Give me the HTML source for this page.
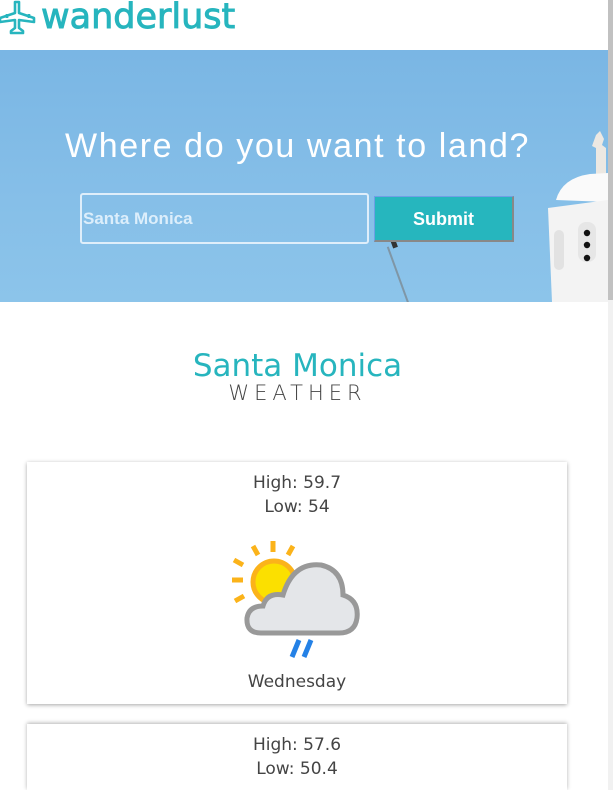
<!DOCTYPE html>
<html style="overflow:hidden;height:790px"><head><style>
*{margin:0;padding:0;box-sizing:border-box}
body{width:613px;height:790px;overflow:hidden;background:#fff;font-family:"Liberation Sans",sans-serif;position:relative}
.sb{position:absolute;right:0;top:0;width:5px;height:790px;background:#f1f1f1}
.sb div{position:absolute;left:0;top:0;width:5px;height:300px;background:#c1c1c1}
.logo{position:absolute;left:0;top:-2px;height:38px;display:flex;align-items:center;color:#27b5be;font-size:35px;-webkit-text-stroke:0.9px #27b5be;font-family:"DejaVu Sans",sans-serif}
.hero{position:absolute;left:0;top:50px;width:608px;height:252px;background:linear-gradient(180deg,#7ab6e4 0%,#86bfe8 60%,#8cc4ea 100%);overflow:hidden}
.hero h1{position:absolute;left:0;width:595px;top:77px;text-align:center;color:#fff;font-weight:normal;font-size:34px;font-family:"Liberation Sans",sans-serif;letter-spacing:1.6px}
.inp{position:absolute;left:80px;top:143px;width:289px;height:51px;border:2px solid #dfeefa;border-radius:3px;color:#dceefb;font-size:17px;font-weight:bold;line-height:47px;padding-left:1px}
.btn{position:absolute;left:374px;top:146px;width:140px;height:46px;background:#26b6be;border:1px solid #6f9fe6;border-right:2px solid #888;border-bottom:2px solid #888;color:#fff;font-weight:bold;font-size:18px;text-align:center;line-height:44px}
.title{position:absolute;top:348px;left:0;width:595px;text-align:center;color:#27b5be;font-size:31px;font-family:"DejaVu Sans",sans-serif}
.sub{position:absolute;top:381px;left:0;width:595px;text-align:center;color:#444;font-size:21px;letter-spacing:5px;font-family:"DejaVu Sans",sans-serif;font-weight:300}
.card{position:absolute;left:27px;width:540px;background:#fff;box-shadow:0 1px 4px rgba(0,0,0,.35);text-align:center;color:#444;font-size:17px;font-family:"DejaVu Sans",sans-serif}
.card p{line-height:24px}
</style></head><body>
<div class="sb"><div></div></div>
<div class="logo"><svg width="36" height="36" viewBox="0 0 36 36" fill="none" stroke="#27b5be" stroke-width="2.6" stroke-linejoin="round"><path d="M15 3h4v11l15 5v4l-15-2v8l4 3v2h-12v-2l4-3v-8l-15 2v-4l15-5z"/><path d="M7 15v4M29 15v4"/></svg><span style="margin-left:5px">wanderlust</span></div>
<div class="hero">
<svg style="position:absolute;left:540px;top:80px" width="68" height="172" viewBox="0 0 68 172">
<path d="M56 5 l4 -4 l4 8 l-2 6 l4 3 v30 h-10 v-30 l-4 -2 z" fill="#ece8e2"/>
<path d="M16 70 Q22 48 50 44 L68 43 L68 72 Z" fill="#fafafa"/>
<path d="M8 78 L68 70 L68 172 L12 172 Z" fill="#f3f3f3"/>
<rect x="38" y="92" width="18" height="40" rx="8" fill="#e6e6e6"/>
<rect x="14" y="100" width="10" height="40" rx="5" fill="#e2e2e2"/>
<circle cx="47" cy="103" r="3.2" fill="#111"/><circle cx="47" cy="115" r="3.2" fill="#111"/><circle cx="47" cy="128" r="3.2" fill="#111"/>
</svg>
<div style="position:absolute;left:397px;top:195px;width:2px;height:60px;background:#7f96a6;transform:rotate(-20deg)"></div>
<div style="position:absolute;left:391px;top:186px;width:5px;height:12px;background:#333;transform:rotate(-20deg)"></div>
<h1>Where do you want to land?</h1>
<div class="inp">Santa Monica</div>
<div class="btn">Submit</div>
</div>
<div class="title">Santa Monica</div>
<div class="sub">WEATHER</div>
<div class="card" style="top:462px;height:242px">
<p style="margin-top:9px">High: 59.7</p><p>Low: 54</p>
<svg style="position:absolute;left:204px;top:78px" width="132" height="122" viewBox="0 0 132 122">
<g stroke="#fbb31a" stroke-width="5"><path d="M42 1v11M62 6l-5 9M22 6l5 9M3 20l9 5M1 40h11M4 61l9-5"/></g>
<circle cx="43" cy="42" r="21" fill="#fbe000" stroke="#fbb31a" stroke-width="5"/>
<path d="M30 93 Q15 93 16 78 Q18 66 32 66 Q36 52 52 55 Q62 22 90 25 Q112 30 112 55 Q128 60 126 78 Q124 93 108 93 Z" fill="#e4e6e9" stroke="#999" stroke-width="5"/>
<path d="M68 100l-7 17M80 100l-7 17" stroke="#2481e6" stroke-width="5"/>
</svg>
<p style="position:absolute;top:208px;width:100%">Wednesday</p>
</div>
<div class="card" style="top:724px;height:66px;box-shadow:0 -1px 4px rgba(0,0,0,.3)">
<p style="margin-top:9px">High: 57.6</p><p>Low: 50.4</p>
</div>
</body></html>
